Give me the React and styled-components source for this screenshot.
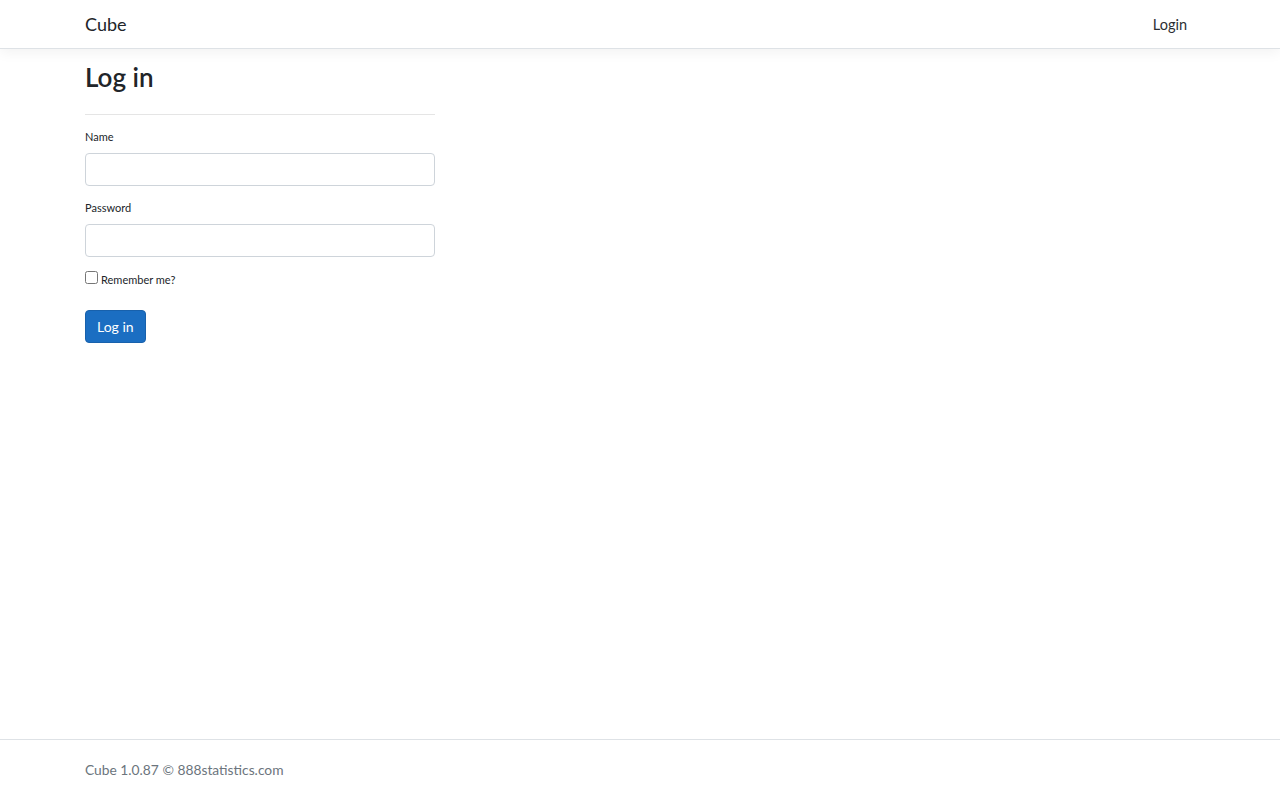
import React from 'react'
import styled, { createGlobalStyle } from 'styled-components'

const GlobalStyle = createGlobalStyle`
  html, body {
    margin: 0;
    padding: 0;
    height: 100%;
  }
  body {
    font-family: Lato, "Noto Sans", sans-serif;
    color: #212529;
    background: #fff;
  }
  #root {
    min-height: 100%;
    display: flex;
    flex-direction: column;
  }
`

const Page = styled.div`
  min-height: 100vh;
  display: flex;
  flex-direction: column;
`

const Navbar = styled.header`
  height: 48px;
  border-bottom: 1px solid #dee2e6;
  box-shadow: 0 4px 12px rgba(0, 0, 0, 0.05);
  background: #fff;
`

const Container = styled.div`
  width: 1140px;
  margin: 0 auto;
  padding: 0 15px;
  box-sizing: border-box;
`

const NavInner = styled(Container)`
  height: 100%;
  display: flex;
  align-items: center;
  justify-content: space-between;
`

const Brand = styled.a`
  font-size: 18px;
  color: #212529;
  text-decoration: none;
  padding-bottom: 1px;
`

const NavLink = styled.a`
  font-size: 14.5px;
  color: #2b2f33;
  text-decoration: none;
  padding: 0 8px;
`

const Main = styled(Container)`
  flex: 1;
  padding-top: 13px;
`

const Column = styled.section`
  width: 350px;
`

const Title = styled.h2`
  margin: 0;
  font-size: 26px;
  font-weight: 600;
  line-height: 1.2;
`

const Rule = styled.hr`
  margin: 21px 0 14px;
  border: 0;
  border-top: 1px solid #e5e5e5;
`

const Group = styled.div`
  margin-bottom: 14px;
`

const Label = styled.label`
  display: block;
  font-size: 11px;
  line-height: 16px;
  margin-bottom: 8px;
`

const Input = styled.input`
  display: block;
  width: 100%;
  height: 33px;
  box-sizing: border-box;
  border: 1px solid #ced4da;
  border-radius: 4px;
  padding: 5px 11px;
  font: inherit;
  font-size: 14px;
`

const CheckRow = styled.div`
  display: flex;
  align-items: flex-start;
  gap: 3px;
`

const Check = styled.input`
  margin: 0;
  width: 13px;
  height: 13px;
`

const CheckLabel = styled.label`
  font-size: 11px;
  line-height: 16px;
  padding-top: 1px;
`

const Button = styled.button`
  margin-top: 22px;
  height: 33px;
  padding: 0 11px;
  border: 1px solid #1861ac;
  border-radius: 4px;
  background: #1b6ec2;
  color: #fff;
  font-family: inherit;
  font-size: 14px;
  line-height: 21px;
`

const Footer = styled.footer`
  border-top: 1px solid #dee2e6;
  line-height: 60px;
  font-size: 13.8px;
  color: #6c757d;
`

const App = () => {
  return (
    <Page>
      <GlobalStyle />
      <Navbar>
        <NavInner>
          <Brand href="#">Cube</Brand>
          <NavLink href="#">Login</NavLink>
        </NavInner>
      </Navbar>
      <Main>
        <Column>
          <Title>Log in</Title>
          <Rule />
          <Group>
            <Label htmlFor="name">Name</Label>
            <Input id="name" type="text" />
          </Group>
          <Group>
            <Label htmlFor="password">Password</Label>
            <Input id="password" type="password" />
          </Group>
          <CheckRow>
            <Check id="remember" type="checkbox" />
            <CheckLabel htmlFor="remember">Remember me?</CheckLabel>
          </CheckRow>
          <Button type="submit">Log in</Button>
        </Column>
      </Main>
      <Footer>
        <Container>Cube 1.0.87 © 888statistics.com</Container>
      </Footer>
    </Page>
  )
}

export default App
